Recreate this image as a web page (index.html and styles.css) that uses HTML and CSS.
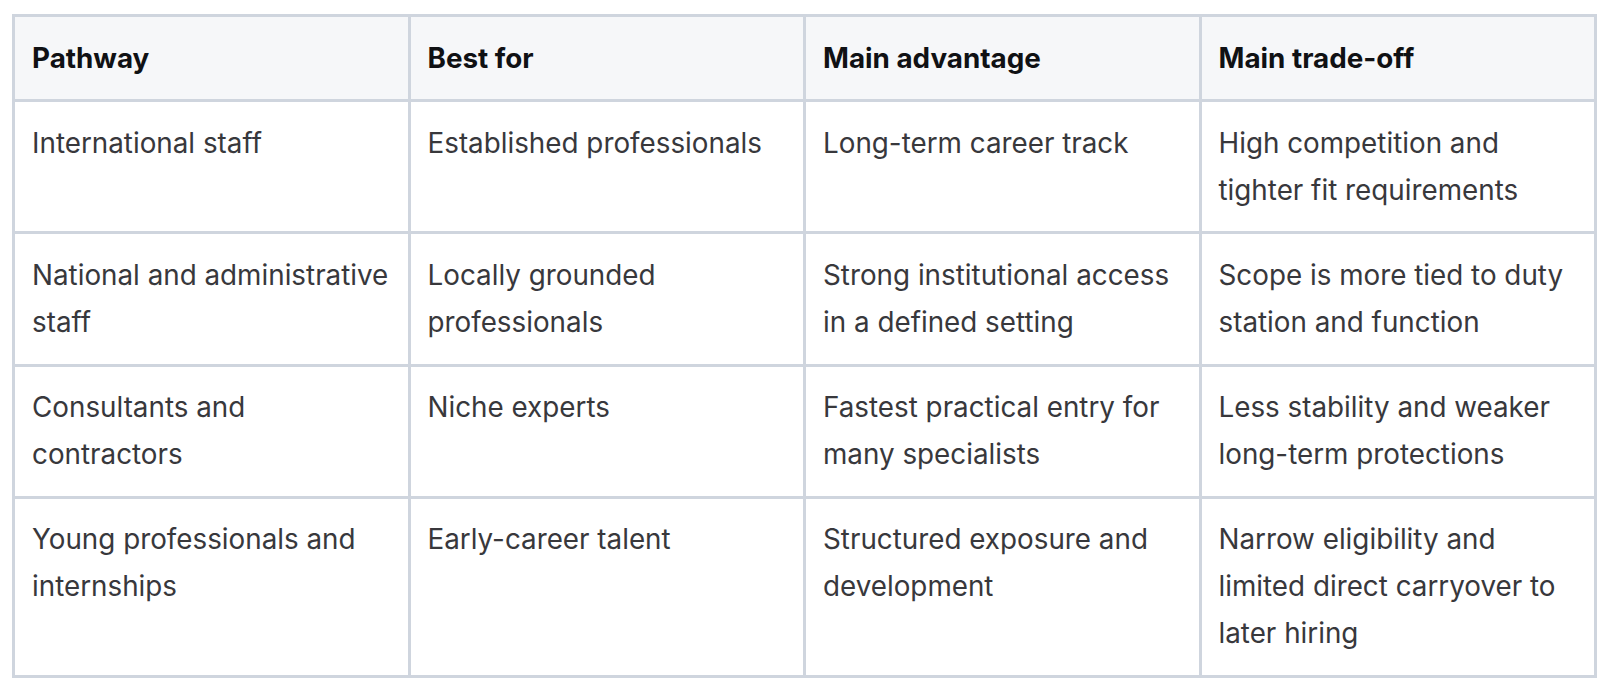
FILE: index.html
```html
<!DOCTYPE html>
<html lang="en">
<head>
<meta charset="utf-8">
<title>Pathways</title>
<link rel="stylesheet" href="styles.css">
</head>
<body>
<div class="wrap">
<table class="grid">
<thead>
<tr><th>Pathway</th><th>Best for</th><th>Main advantage</th><th>Main trade-off</th></tr>
</thead>
<tbody>
<tr><td>International staff</td><td>Established professionals</td><td>Long-term career track</td><td>High competition and tighter fit requirements</td></tr>
<tr><td>National and administrative staff</td><td>Locally grounded professionals</td><td>Strong institutional access in a defined setting</td><td>Scope is more tied to duty station and function</td></tr>
<tr><td>Consultants and contractors</td><td>Niche experts</td><td>Fastest practical entry for many specialists</td><td>Less stability and weaker long-term protections</td></tr>
<tr><td>Young professionals and internships</td><td>Early-career talent</td><td>Structured exposure and development</td><td>Narrow eligibility and limited direct carryover to later hiring</td></tr>
</tbody>
</table>
</div>
</body>
</html>
```
FILE: styles.css
```css
html, body {
  margin: 0;
  padding: 0;
  background: #ffffff;
}
.wrap {
  padding: 14px 13px 12px 12px;
  font-family: Inter, "Noto Sans", sans-serif;
}
.grid {
  width: 100%;
  border-collapse: collapse;
  table-layout: fixed;
  border: 3px solid #cfd5de;
}
.grid th, .grid td {
  border: 3px solid #cfd5de;
  padding: 17.6px 14px 17.6px 17px;
  text-align: left;
  vertical-align: top;
  font-size: 27.8px;
  line-height: 47px;
}
.grid th {
  background: #f6f7f9;
  color: #101114;
  font-weight: 700;
}
.grid td {
  color: #38383c;
  font-weight: 400;
}
```
